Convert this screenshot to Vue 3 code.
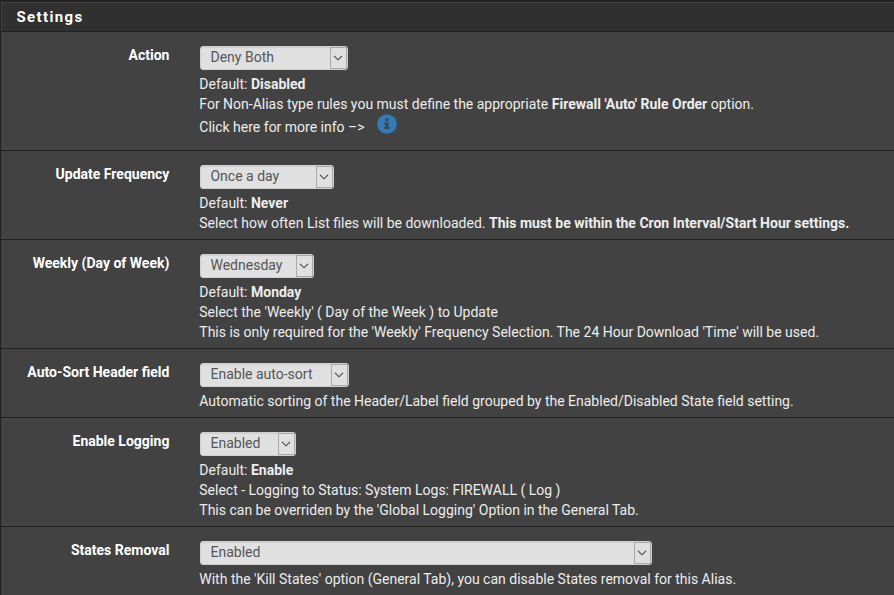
<template>
    <div class="panel">
        <div class="panel-heading">
            <h2 class="panel-title">Settings</h2>
        </div>
        <div class="panel-body">
            <div class="form-group" v-for="row in rows" :key="row.label">
                <label class="control-label">{{ row.label }}</label>
                <div class="control">
                    <div class="select-box" :style="{width:row.width + 'px'}">
                        <select v-model="row.value">
                            <option v-for="opt in row.options" :key="opt">{{ opt }}</option>
                        </select>
                        <span class="select-arrow">
                            <svg width="10" height="6" viewBox="0 0 10 6"><path d="M1 .8 5 4.8 9 .8" fill="none" stroke="#444" stroke-width="1.1"/></svg>
                        </span>
                    </div>
                    <div class="help">
                        <p v-for="(line,i) in row.help" :key="i"><template v-for="(part,j) in line" :key="j"><b v-if="part.b">{{ part.b }}</b><template v-else>{{ part }}</template></template></p>
                        <p v-if="row.info" class="info-line">
                            <span>{{ row.info }}</span>
                            <svg class="info-icon" width="20" height="20" viewBox="0 0 20 20">
                                <circle cx="10" cy="10" r="9.8" fill="#337ab7"/>
                                <path d="M8.6 4.6h2.8v2.3H8.6zM7.4 8.4h4v4.6h1.2v2H7.4v-2h1.2v-2.6H7.4z" fill="#424242"/>
                            </svg>
                        </p>
                    </div>
                </div>
            </div>
        </div>
    </div>
</template>
<script setup>
    import { ref } from 'vue'
    const rows = ref([
        {
            label:"Action", value:"Deny Both", width:148,
            options:["Disabled","Deny Inbound","Deny Outbound","Deny Both"],
            help:[
                ["Default: ",{b:"Disabled"}],
                ["For Non-Alias type rules you must define the appropriate ",{b:"Firewall 'Auto' Rule Order"}," option."]
            ],
            info:"Click here for more info –>"
        },
        {
            label:"Update Frequency", value:"Once a day", width:134,
            options:["Never","Once a day","Weekly"],
            help:[
                ["Default: ",{b:"Never"}],
                ["Select how often List files will be downloaded. ",{b:"This must be within the Cron Interval/Start Hour settings."}]
            ]
        },
        {
            label:"Weekly (Day of Week)", value:"Wednesday", width:114,
            options:["Monday","Tuesday","Wednesday","Thursday","Friday","Saturday","Sunday"],
            help:[
                ["Default: ",{b:"Monday"}],
                ["Select the 'Weekly' ( Day of the Week ) to Update"],
                ["This is only required for the 'Weekly' Frequency Selection. The 24 Hour Download 'Time' will be used."]
            ]
        },
        {
            label:"Auto-Sort Header field", value:"Enable auto-sort", width:149,
            options:["Enable auto-sort","Disable auto-sort"],
            help:[["Automatic sorting of the Header/Label field grouped by the Enabled/Disabled State field setting."]]
        },
        {
            label:"Enable Logging", value:"Enabled", width:96,
            options:["Enabled","Disabled"],
            help:[
                ["Default: ",{b:"Enable"}],
                ["Select - Logging to Status: System Logs: FIREWALL ( Log )"],
                ["This can be overriden by the 'Global Logging' Option in the General Tab."]
            ]
        },
        {
            label:"States Removal", value:"Enabled", width:452,
            options:["Enabled","Disabled"],
            help:[["With the 'Kill States' option (General Tab), you can disable States removal for this Alias."]]
        }
    ]);
</script>
<style>
    body{
        background:#212121;
        overflow:hidden;
    }
</style>
<style scoped>
    .panel{
        box-sizing:border-box;
        height:595px;
        padding:2px 0 0 1px;
        overflow:hidden;
        font:14px/20px Roboto, sans-serif;
        color:#ededed;
    }
    .panel-heading{
        box-sizing:border-box;
        height:30px;
        padding:4px 0 0 14.5px;
        background:#303030;
        border:solid #424242;
        border-width:1px 0 0 1px;
        border-bottom:1px solid #212121;
    }
    .panel-title{
        margin:0;
        font-size:15px;
        line-height:20px;
        font-weight:700;
        letter-spacing:1.35px;
        color:#fff;
    }
    .panel-body{
        background:#424242;
    }
    .form-group{
        display:flex;
        padding:14px 0 6px;
        border-bottom:1px solid #212121;
    }
    .control-label{
        width:168.4px;
        flex:none;
        margin:-1px 29.6px 0 0;
        text-align:right;
        font-weight:700;
        color:#fff;
    }
    .control{
        flex:1;
        padding-left:1px;
    }
    .select-box{
        box-sizing:border-box;
        display:flex;
        height:24px;
        padding:0 0 0 1px;
        background:#e0e0e0;
        border:1px solid #d0d0d0;
        border-radius:3px;
        box-shadow:inset 0 1px 1px rgba(0,0,0,.075);
    }
    .select-box select{
        flex:1;
        min-width:0;
        height:20px;
        margin:0;
        padding:0 0 0 8.5px;
        appearance:none;
        border:0;
        background:none;
        font:14px/20px Roboto, sans-serif;
        color:#555;
    }
    .select-arrow{
        box-sizing:border-box;
        width:17px;
        display:flex;
        align-items:center;
        justify-content:center;
        border:1px solid #aaa;
    }
    .help{
        padding-top:4px;
        margin-left:-.7px;
    }
    .help p{
        margin:0;
        white-space:nowrap;
    }
    .help .info-line{
        display:flex;
        box-sizing:border-box;
        height:30px;
        padding-top:3px;
    }
    .info-icon{
        margin:-3px 0 0 12.4px;
    }
</style>
